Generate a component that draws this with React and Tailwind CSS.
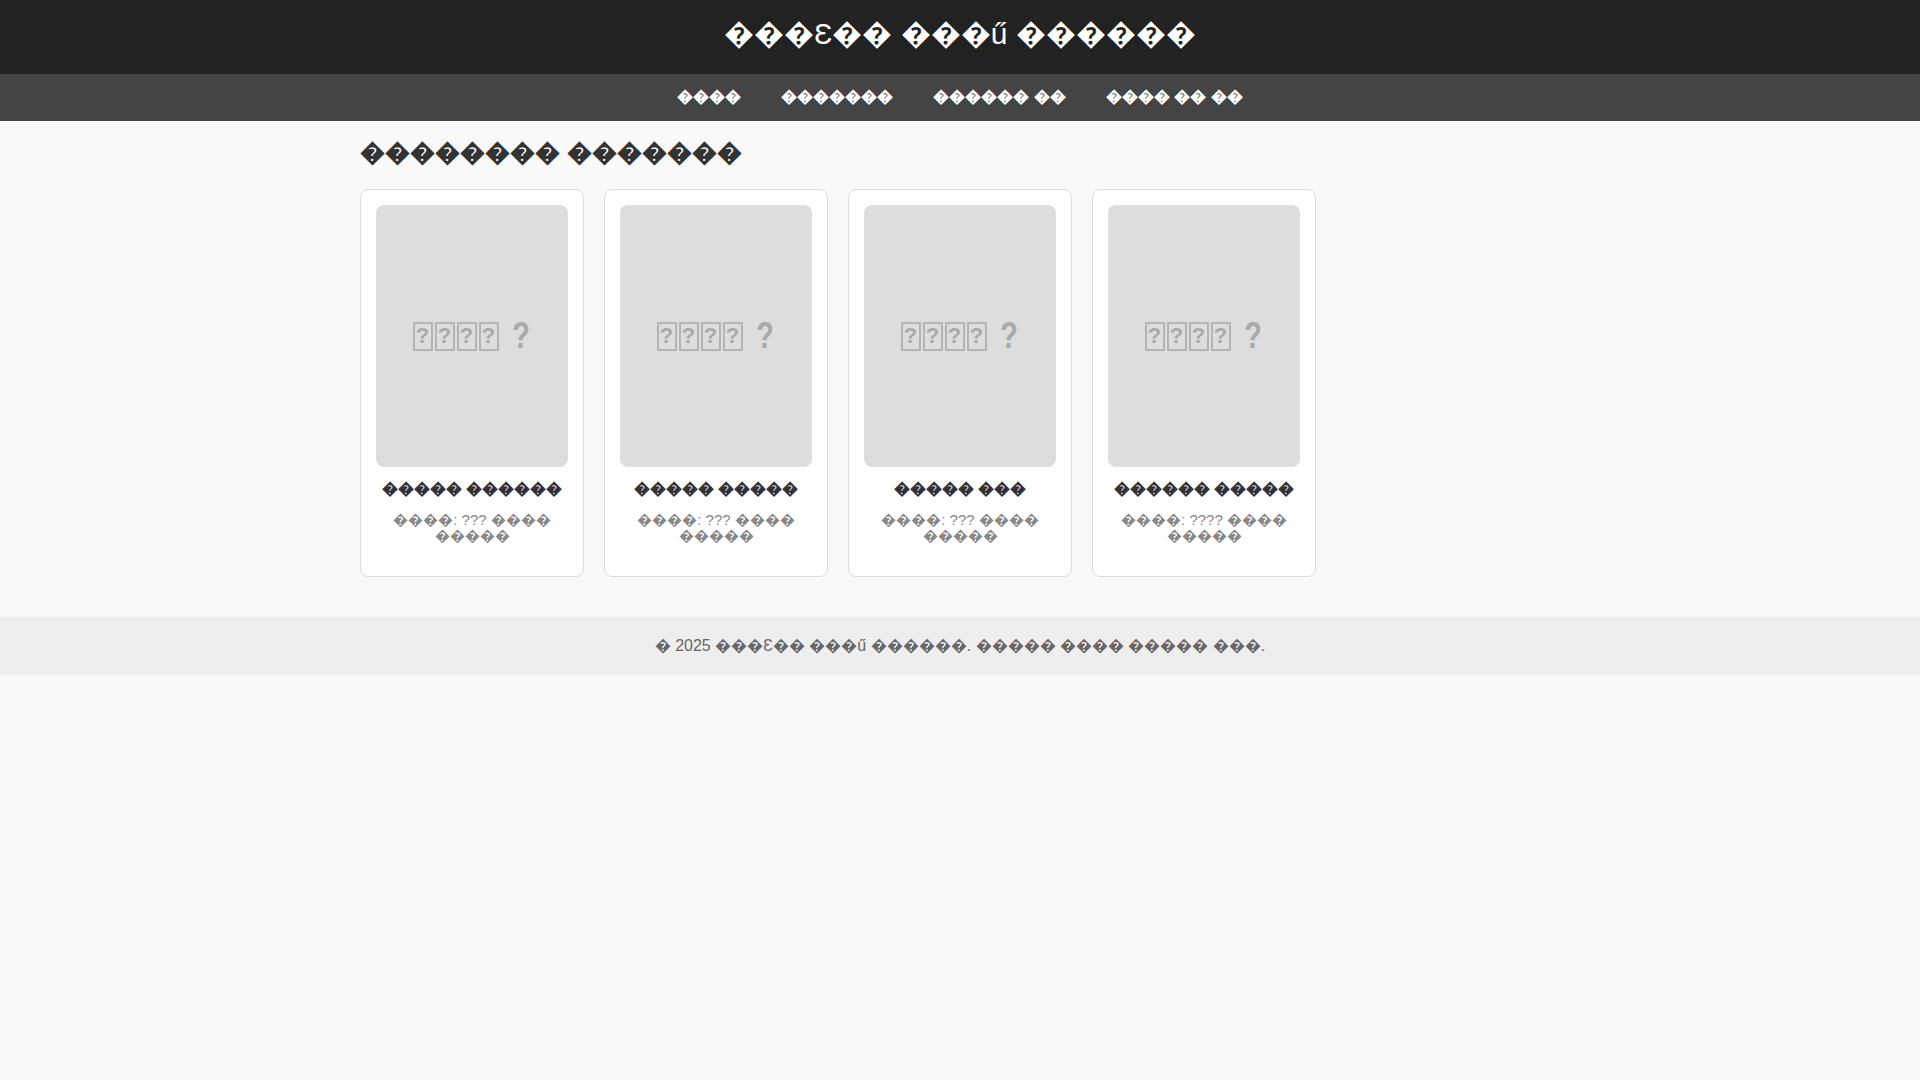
const NAV = ['����', '�������', '������ ��', '���� �� ��'];

const ITEMS = [
  { id: 1, name: '����� ������', desc: '����: ??? ���� �����' },
  { id: 2, name: '����� �����', desc: '����: ??? ���� �����' },
  { id: 3, name: '����� ���', desc: '����: ??? ���� �����' },
  { id: 4, name: '������ �����', desc: '����: ???? ���� �����' },
];

function Placeholder() {
  return (
    <div className="h-[262px] bg-[#ddd] rounded-lg flex items-center justify-center text-[#aaa] font-bold">
      <div className="flex items-center gap-[2px]">
        {[0, 1, 2, 3].map(i => (
          <span key={i} className="w-[20px] h-[29px] border-2 border-[#b5b5b5] flex items-center justify-center text-[22px] leading-none">?</span>
        ))}
      </div>
      <span className="ml-[11px] text-[36px] leading-none scale-x-[0.8]">?</span>
    </div>
  );
}

function Card({ item }) {
  return (
    <div className="bg-white border border-[#ddd] rounded-lg p-[15px] pb-[32px] text-center">
      <Placeholder />
      <h3 className="mt-[12px] text-[16px] font-bold text-[#333] leading-[20px]">{item.name}</h3>
      <p className="mt-[13px] text-[15px] text-[#888] leading-[16px]">{item.desc}</p>
    </div>
  );
}

export default function App() {
  return (
    <div className="min-h-screen bg-[#f9f9f9] font-['Liberation_Sans',Arial,sans-serif]">
      <header className="bg-[#222] h-[74px] flex items-center justify-center pb-[7px]">
        <h1 className="text-white text-[30px] font-normal leading-[36px]">���Ɛ�� ���ű ������</h1>
      </header>
      <nav className="bg-[#444] h-[47px] flex items-center justify-center gap-[40px] pb-[2px]">
        {NAV.map(n => (
          <a key={n} className="text-white text-[16px] font-bold">{n}</a>
        ))}
      </nav>
      <main className="w-[1200px] mx-auto pt-[16px] pb-[40px]">
        <h2 className="text-[25px] font-bold text-[#333] leading-[30px] mb-[22px]">�������� �������</h2>
        <div className="grid grid-cols-5 gap-5">
          {ITEMS.map(it => <Card key={it.id} item={it} />)}
        </div>
      </main>
      <footer className="bg-[#eee] h-[58px] flex items-center justify-center text-[#666] text-[16px]">
        � 2025 ���Ɛ�� ���ű ������. ����� ���� ����� ���.
      </footer>
    </div>
  );
}
